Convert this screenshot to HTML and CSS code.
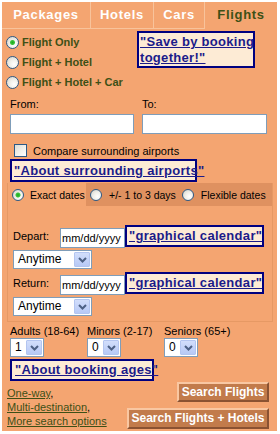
FILE: index.html
```html
<!DOCTYPE html>
<html>
<head>
<meta charset="utf-8">
<link rel="stylesheet" href="styles.css">
</head>
<body>
<div class="panel">
  <div class="tabs">
    <div class="tab tab-pk">Packages</div>
    <div class="tab tab-ht">Hotels</div>
    <div class="tab tab-cr">Cars</div>
    <div class="tab tab-fl active">Flights</div>
  </div>

  <div class="trip">
    <div class="trip-opts">
      <div class="opt"><span class="radio on"></span>Flight Only</div>
      <div class="opt"><span class="radio"></span>Flight + Hotel</div>
      <div class="opt"><span class="radio"></span>Flight + Hotel + Car</div>
    </div>
    <a class="tip tip-save">"Save by booking<br>together!"</a>
  </div>

  <div class="cities">
    <div class="city"><div class="lbl">From:</div><div class="field"></div></div>
    <div class="city"><div class="lbl">To:</div><div class="field"></div></div>
  </div>

  <div class="compare"><span class="check"></span>Compare surrounding airports</div>
  <div class="tiprow"><a class="tip tip-air">"About surrounding airports"</a></div>

  <div class="dates">
    <div class="dtabs">
      <div class="dtab dtab-on"><span class="radio sm on"></span>Exact dates</div>
      <div class="dtab dtab-off">
        <span class="radio sm"></span><span class="dlbl">+/- 1 to 3 days</span>
        <span class="radio sm"></span><span class="dlbl">Flexible dates</span>
      </div>
    </div>

    <div class="drow drow-dep">
      <div class="dlabel">Depart:</div>
      <div class="field datef">mm/dd/yyyy</div>
      <a class="tip tip-cal">"graphical calendar"</a>
    </div>
    <div class="selrow"><div class="sel sel-time"><span class="sel-txt">Anytime</span><span class="sel-btn"><svg width="9" height="6" viewBox="0 0 9 6"><path d="M1 1 L4.5 4.5 L8 1" fill="none" stroke="#4d6185" stroke-width="2"/></svg></span></div></div>

    <div class="drow drow-ret">
      <div class="dlabel">Return:</div>
      <div class="field datef">mm/dd/yyyy</div>
      <a class="tip tip-cal">"graphical calendar"</a>
    </div>
    <div class="selrow"><div class="sel sel-time"><span class="sel-txt">Anytime</span><span class="sel-btn"><svg width="9" height="6" viewBox="0 0 9 6"><path d="M1 1 L4.5 4.5 L8 1" fill="none" stroke="#4d6185" stroke-width="2"/></svg></span></div></div>
  </div>

  <div class="ages">
    <div class="age">
      <div class="lbl">Adults (18-64)</div>
      <div class="sel sel-num"><span class="sel-txt">1</span><span class="sel-btn"><svg width="9" height="6" viewBox="0 0 9 6"><path d="M1 1 L4.5 4.5 L8 1" fill="none" stroke="#4d6185" stroke-width="2"/></svg></span></div>
    </div>
    <div class="age">
      <div class="lbl">Minors (2-17)</div>
      <div class="sel sel-num"><span class="sel-txt">0</span><span class="sel-btn"><svg width="9" height="6" viewBox="0 0 9 6"><path d="M1 1 L4.5 4.5 L8 1" fill="none" stroke="#4d6185" stroke-width="2"/></svg></span></div>
    </div>
    <div class="age">
      <div class="lbl">Seniors (65+)</div>
      <div class="sel sel-num"><span class="sel-txt">0</span><span class="sel-btn"><svg width="9" height="6" viewBox="0 0 9 6"><path d="M1 1 L4.5 4.5 L8 1" fill="none" stroke="#4d6185" stroke-width="2"/></svg></span></div>
    </div>
  </div>
  <div class="tiprow"><a class="tip tip-ages">"About booking ages"</a></div>

  <div class="bottom">
    <div class="links">
      <div><a class="lnk">One-way</a>,</div>
      <div><a class="lnk">Multi-destination</a>,</div>
      <div><a class="lnk">More search options</a></div>
    </div>
    <div class="btns">
      <div class="btn btn-f">Search Flights</div>
      <div class="btn btn-fh">Search Flights + Hotels</div>
    </div>
  </div>
</div>
</body>
</html>
```

FILE: styles.css
```css
* { box-sizing: border-box; }
body {
  margin: 0;
  background: #ffffff;
  font-family: "Liberation Sans", Arial, sans-serif;
  font-size: 11px;
  color: #000;
}
.panel {
  margin: 2px 0 0 2px;
  width: 275px;
  background: #f4a571;
  padding-bottom: 2px;
}

/* tabs */
.tabs { display: flex; height: 27px; }
.tab {
  height: 27px;
  line-height: 26px;
  text-align: center;
  font-weight: bold;
  font-size: 13px;
  letter-spacing: 0.7px;
  color: #ffffff;
  border-right: 1px solid #f8c39b;
  border-bottom: 1px solid #f8c39b;
}
.tab-pk { width: 89px; }
.tab-ht { width: 63px; }
.tab-cr { width: 51px; }
.tab-fl { flex: 1; border: none; color: #3d5016; }

/* trip type */
.trip { display: flex; align-items: flex-start; }
.trip-opts { width: 135px; padding: 3px 0 0 4px; }
.opt {
  height: 20px;
  display: flex;
  align-items: center;
  font-weight: bold;
  color: #3d5016;
}
.radio {
  display: inline-block;
  width: 13px;
  height: 13px;
  border-radius: 50%;
  border: 1px solid #2d5a86;
  background: radial-gradient(circle at 65% 65%, #ffffff 0%, #f0efe9 45%, #cfcdc4 100%);
  margin-right: 3px;
  flex: none;
}
.radio.on {
  background:
    radial-gradient(circle, #1fa81f 0, #3cc43c 2px, rgba(0,0,0,0) 3px),
    radial-gradient(circle at 65% 65%, #ffffff 0%, #f0efe9 45%, #cfcdc4 100%);
}
.radio.sm { width: 12px; height: 12px; }

.tip {
  display: inline-block;
  background: #fdebd5;
  border: 2px solid #00007f;
  color: #1b1b8a;
  font-weight: bold;
  font-size: 13px;
  letter-spacing: 0.3px;
  text-decoration: underline;
  white-space: nowrap;
}
.tip-save {
  margin-top: 2px;
  width: 118px;
  height: 37px;
  line-height: 16px;
  padding: 1px 0 0 1px;
}

/* cities */
.cities {
  display: grid;
  grid-template-columns: 124px 125px;
  column-gap: 8px;
  padding-left: 8px;
  margin-top: 6px;
}
.lbl { line-height: 13px; height: 13px; white-space: nowrap; }
.field {
  margin-top: 3px;
  height: 20px;
  background: #ffffff;
  border: 1px solid #7f9db9;
}

.compare {
  margin-top: 9px;
  height: 15px;
  display: flex;
  align-items: center;
  padding-left: 12px;
}
.check {
  width: 13px;
  height: 13px;
  border: 1px solid #2d5a86;
  background: linear-gradient(135deg, #dcdbd4 0%, #f4f3ee 60%, #ffffff 100%);
  margin-right: 6px;
}
.tiprow { padding-left: 8px; }
.tip-air {
  margin-top: 1px;
  height: 23px;
  line-height: 19px;
  width: 187px;
  padding-left: 2px;
}

/* dates */
.dates {
  margin: 1px 0 0 5px;
  width: 266px;
  border: 1px solid #e69964;
  border-top: none;
  padding-bottom: 5px;
}
.dtabs { display: flex; height: 23px; }
.dtab {
  display: flex;
  align-items: center;
  height: 23px;
  white-space: nowrap;
  font-size: 10.5px;
}
.dtab-on { width: 78px; padding-left: 4px; }
.dtab-on .radio { margin-right: 6px; }
.dtab-off {
  flex: 1;
  background: #df9160;
  padding-left: 4px;
}
.dtab-off .radio { margin-right: 7px; }
.dtab-off .dlbl { margin-right: 6px; }

.drow {
  display: flex;
  align-items: flex-start;
  padding-left: 5px;
  height: 22px;
}
.drow-dep { margin-top: 19px; }
.drow-ret { margin-top: 3px; }
.dlabel { width: 47px; margin-top: 5px; line-height: 13px; }
.datef {
  width: 65px;
  height: 20px;
  margin-top: 3px;
  line-height: 18px;
  padding-left: 1px;
  font-size: 11px;
  color: #000;
  white-space: nowrap;
}
.tip-cal {
  width: 139px;
  height: 22px;
  line-height: 18px;
  padding-left: 2px;
}
.selrow { padding-left: 5px; margin-top: 3px; }

.sel {
  display: flex;
  align-items: stretch;
  height: 19px;
  background: #ffffff;
  border: 1px solid #7f9db9;
  padding: 1px;
}
.sel-txt { flex: 1; line-height: 15px; padding-left: 3px; font-size: 12px; }
.sel-btn {
  width: 16px;
  background: linear-gradient(180deg, #d2defb 0%, #b7c9f6 100%);
  border: 1px solid #b3c5f0;
  border-radius: 1px;
  display: flex;
  align-items: center;
  justify-content: center;
}
.sel-time { width: 79px; }
.sel-num { width: 34px; }

/* ages */
.ages {
  display: grid;
  grid-template-columns: 77px 77px 77px;
  padding-left: 8px;
  margin-top: 3px;
}
.tip-ages {
  margin-top: 2px;
  height: 22px;
  line-height: 18px;
  width: 144px;
  padding-left: 3px;
}

/* bottom */
.bottom {
  display: flex;
  justify-content: space-between;
  align-items: flex-start;
  padding: 0 8px 0 5px;
}
.links { padding-top: 5px; line-height: 14px; color: #000; }
.lnk { color: #3d5016; text-decoration: underline; }
.btns {
  margin-top: 1px;
  display: flex;
  flex-direction: column;
  align-items: flex-end;
  gap: 6px;
}
.btn {
  background: #c27b4b;
  color: #ffffff;
  font-weight: bold;
  font-size: 12px;
  text-align: center;
  border: 2px solid;
  border-color: #f9c7a2 #8a5232 #8a5232 #f9c7a2;
  white-space: nowrap;
}
.btn-f { width: 92px; height: 20px; line-height: 16px; }
.btn-fh { width: 142px; height: 21px; line-height: 17px; }
```
